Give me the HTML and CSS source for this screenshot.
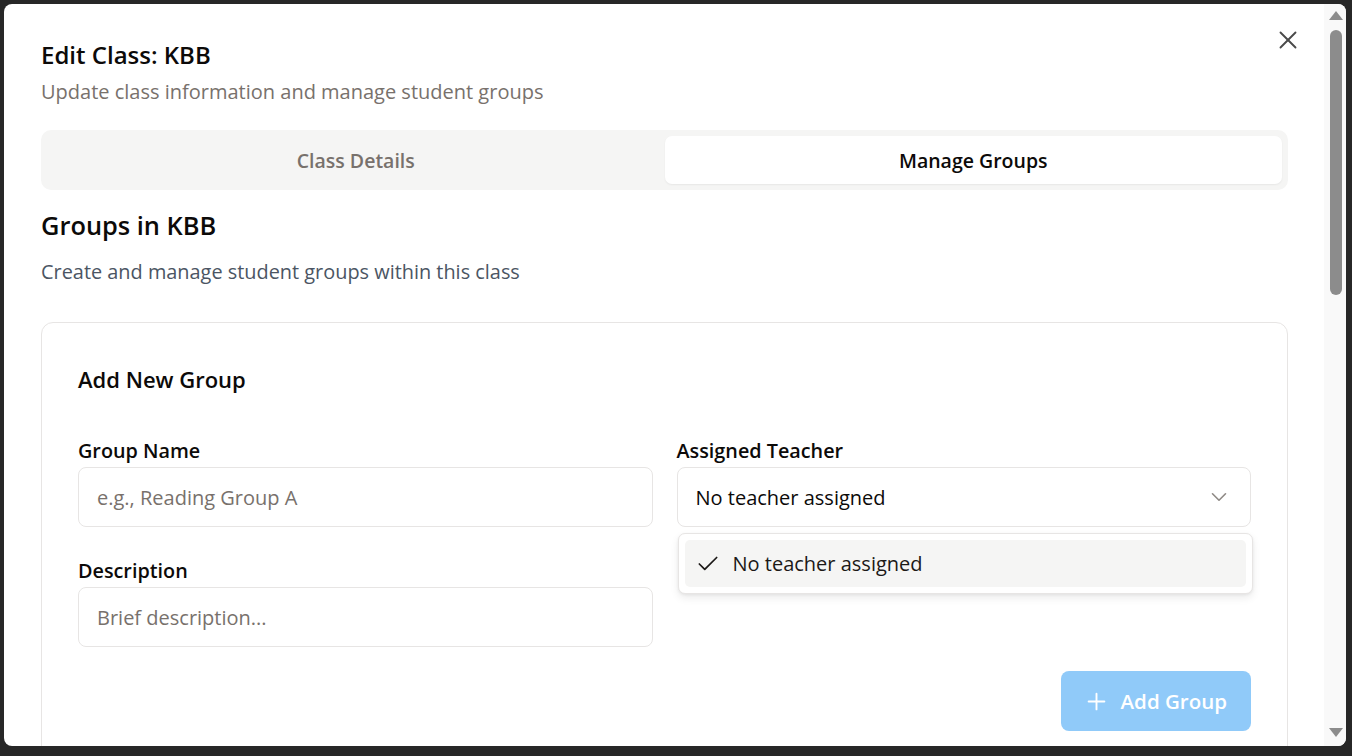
FILE: index.html
```html
<!DOCTYPE html>
<html lang="en">
<head>
<meta charset="utf-8">
<title>Edit Class: KBB</title>
<link rel="stylesheet" href="styles.css">
</head>
<body>
<div class="modal">
  <div class="content">
    <header class="dialog-header">
      <h2 class="dialog-title">Edit Class: KBB</h2>
      <p class="dialog-sub">Update class information and manage student groups</p>
    </header>
    <div class="tabs">
      <div class="tab">Class Details</div>
      <div class="tab tab-active">Manage Groups</div>
    </div>
    <h3 class="section-title">Groups in KBB</h3>
    <p class="section-sub">Create and manage student groups within this class</p>
    <div class="card">
      <h4 class="card-title">Add New Group</h4>
      <div class="form-grid">
        <div class="field">
          <label class="label">Group Name</label>
          <div class="input placeholder">e.g., Reading Group A</div>
        </div>
        <div class="field field-select">
          <label class="label">Assigned Teacher</label>
          <div class="input select">
            <span>No teacher assigned</span>
            <svg class="chev" width="26" height="26" viewBox="0 0 24 24" fill="none" stroke="currentColor" stroke-width="1.5" stroke-linecap="round" stroke-linejoin="round"><path d="m6 9 6 6 6-6"/></svg>
          </div>
          <div class="menu">
            <div class="menu-item">
              <svg class="check" width="26" height="26" viewBox="0 0 24 24" fill="none" stroke="currentColor" stroke-width="1.6" stroke-linecap="round" stroke-linejoin="round"><path d="M20 6 9 17l-5-5"/></svg>
              <span>No teacher assigned</span>
            </div>
          </div>
        </div>
        <div class="field">
          <label class="label">Description</label>
          <div class="input placeholder">Brief description...</div>
        </div>
      </div>
      <div class="actions">
        <button class="btn-add">
          <svg width="27" height="27" viewBox="0 0 24 24" fill="none" stroke="currentColor" stroke-width="1.7" stroke-linecap="round" stroke-linejoin="round"><path d="M5 12h14"/><path d="M12 5v14"/></svg>
          <span>Add Group</span>
        </button>
      </div>
    </div>
  </div>
  <div class="scrollbar">
    <div class="arrow arrow-up"></div>
    <div class="track"><div class="thumb"></div></div>
    <div class="arrow arrow-down"></div>
  </div>
  <button class="close" aria-label="Close">
    <svg width="30" height="30" viewBox="0 0 24 24" fill="none" stroke="currentColor" stroke-width="1.5" stroke-linecap="round" stroke-linejoin="round"><path d="M18 6 6 18"/><path d="m6 6 12 12"/></svg>
  </button>
</div>
</body>
</html>
```
FILE: styles.css
```css
* { box-sizing: border-box; }
html, body { margin: 0; padding: 0; }
body {
  width: 1352px;
  height: 756px;
  overflow: hidden;
  background: #272727;
  font-family: "Open Sans", "Noto Sans", sans-serif;
  color: #0c0a09;
}
.modal {
  position: relative;
  margin: 4px 6px 0 4px;
  width: 1342px;
  height: 742px;
  background: #ffffff;
  border-radius: 8px;
  display: flex;
  overflow: hidden;
}
.content {
  flex: 1;
  min-width: 0;
  padding: 35px 36px 0 37px;
  overflow: hidden;
}
.dialog-title {
  margin: 0;
  font-size: 24px;
  line-height: 32px;
  font-weight: 600;
}
.dialog-sub {
  margin: 7px 0 0;
  font-size: 20px;
  line-height: 28px;
  color: #78716c;
}
.tabs {
  margin-top: 24px;
  height: 60px;
  background: #f5f5f4;
  border-radius: 10px;
  padding: 6px;
  display: grid;
  grid-template-columns: 1fr 1fr;
}
.tab {
  display: flex;
  align-items: center;
  justify-content: center;
  font-size: 19.5px;
  font-weight: 600;
  color: #78716c;
  border-radius: 7px;
}
.tab-active {
  background: #ffffff;
  color: #0c0a09;
  box-shadow: 0 1px 2px rgba(0,0,0,0.06);
}
.section-title {
  margin: 19px 0 0;
  font-size: 25.4px;
  line-height: 32px;
  font-weight: 600;
}
.section-sub {
  margin: 17px 0 0;
  font-size: 19.9px;
  line-height: 28px;
  color: #4b5563;
}
.card {
  margin-top: 36px;
  border: 1px solid #e7e5e4;
  border-radius: 12px;
  padding: 41px 36px 40px;
}
.card-title {
  margin: 0;
  font-size: 22px;
  line-height: 30px;
  font-weight: 600;
}
.form-grid {
  margin-top: 45px;
  display: grid;
  grid-template-columns: 1fr 1fr;
  column-gap: 24px;
  row-gap: 32px;
}
.field {
  display: flex;
  flex-direction: column;
  gap: 4px;
}
.field-select { position: relative; }
.label {
  font-size: 19.8px;
  line-height: 24px;
  font-weight: 600;
  color: #0c0a09;
}
.input {
  height: 60px;
  border: 1px solid #e7e5e4;
  border-radius: 8px;
  padding: 0 18px;
  display: flex;
  align-items: center;
  font-size: 20px;
  color: #0c0a09;
  background: #ffffff;
}
.placeholder { color: #78716c; }
.select {
  justify-content: space-between;
  padding-right: 18px;
}
.chev { color: #8f8a86; }
.menu {
  position: absolute;
  top: 94px;
  left: 1px;
  right: -2px;
  background: #ffffff;
  border: 1px solid #e7e5e4;
  border-radius: 7px;
  padding: 6px;
  box-shadow: 0 4px 8px rgba(0,0,0,0.08), 0 1px 3px rgba(0,0,0,0.06);
  z-index: 2;
}
.menu-item {
  height: 47px;
  background: #f5f5f4;
  border-radius: 5px;
  display: flex;
  align-items: center;
  gap: 12px;
  padding-left: 10px;
  font-size: 20px;
  color: #1c1917;
}
.check { color: #1c1917; }
.actions {
  margin-top: 24px;
  display: flex;
  justify-content: flex-end;
}
.btn-add {
  height: 60px;
  border: 0;
  border-radius: 8px;
  background: #90caf9;
  color: #ffffff;
  display: flex;
  align-items: center;
  justify-content: center;
  gap: 11px;
  font-family: inherit;
  font-size: 20.5px;
  font-weight: 600;
  padding: 0 24px 0 22px;
}
.scrollbar {
  width: 22px;
  flex: none;
  background: #f9f9f9;
  display: flex;
  flex-direction: column;
  align-items: center;
  padding: 6px 0 6px 2px;
}
.arrow {
  width: 0;
  height: 0;
  border-left: 7px solid transparent;
  border-right: 7px solid transparent;
}
.arrow-up { border-bottom: 9px solid #8c8c8c; margin-top: 1px; }
.arrow-down { border-top: 9px solid #8c8c8c; margin-bottom: 3px; }
.track {
  flex: 1;
  width: 100%;
  display: flex;
  justify-content: center;
  padding-top: 10px;
}
.thumb {
  width: 12px;
  height: 265px;
  background: #8c8c8c;
  border-radius: 6px;
}
.close {
  position: absolute;
  top: 21px;
  right: 43px;
  width: 30px;
  height: 30px;
  padding: 0;
  border: 0;
  background: transparent;
  color: #4a4a4a;
  display: flex;
}
```
